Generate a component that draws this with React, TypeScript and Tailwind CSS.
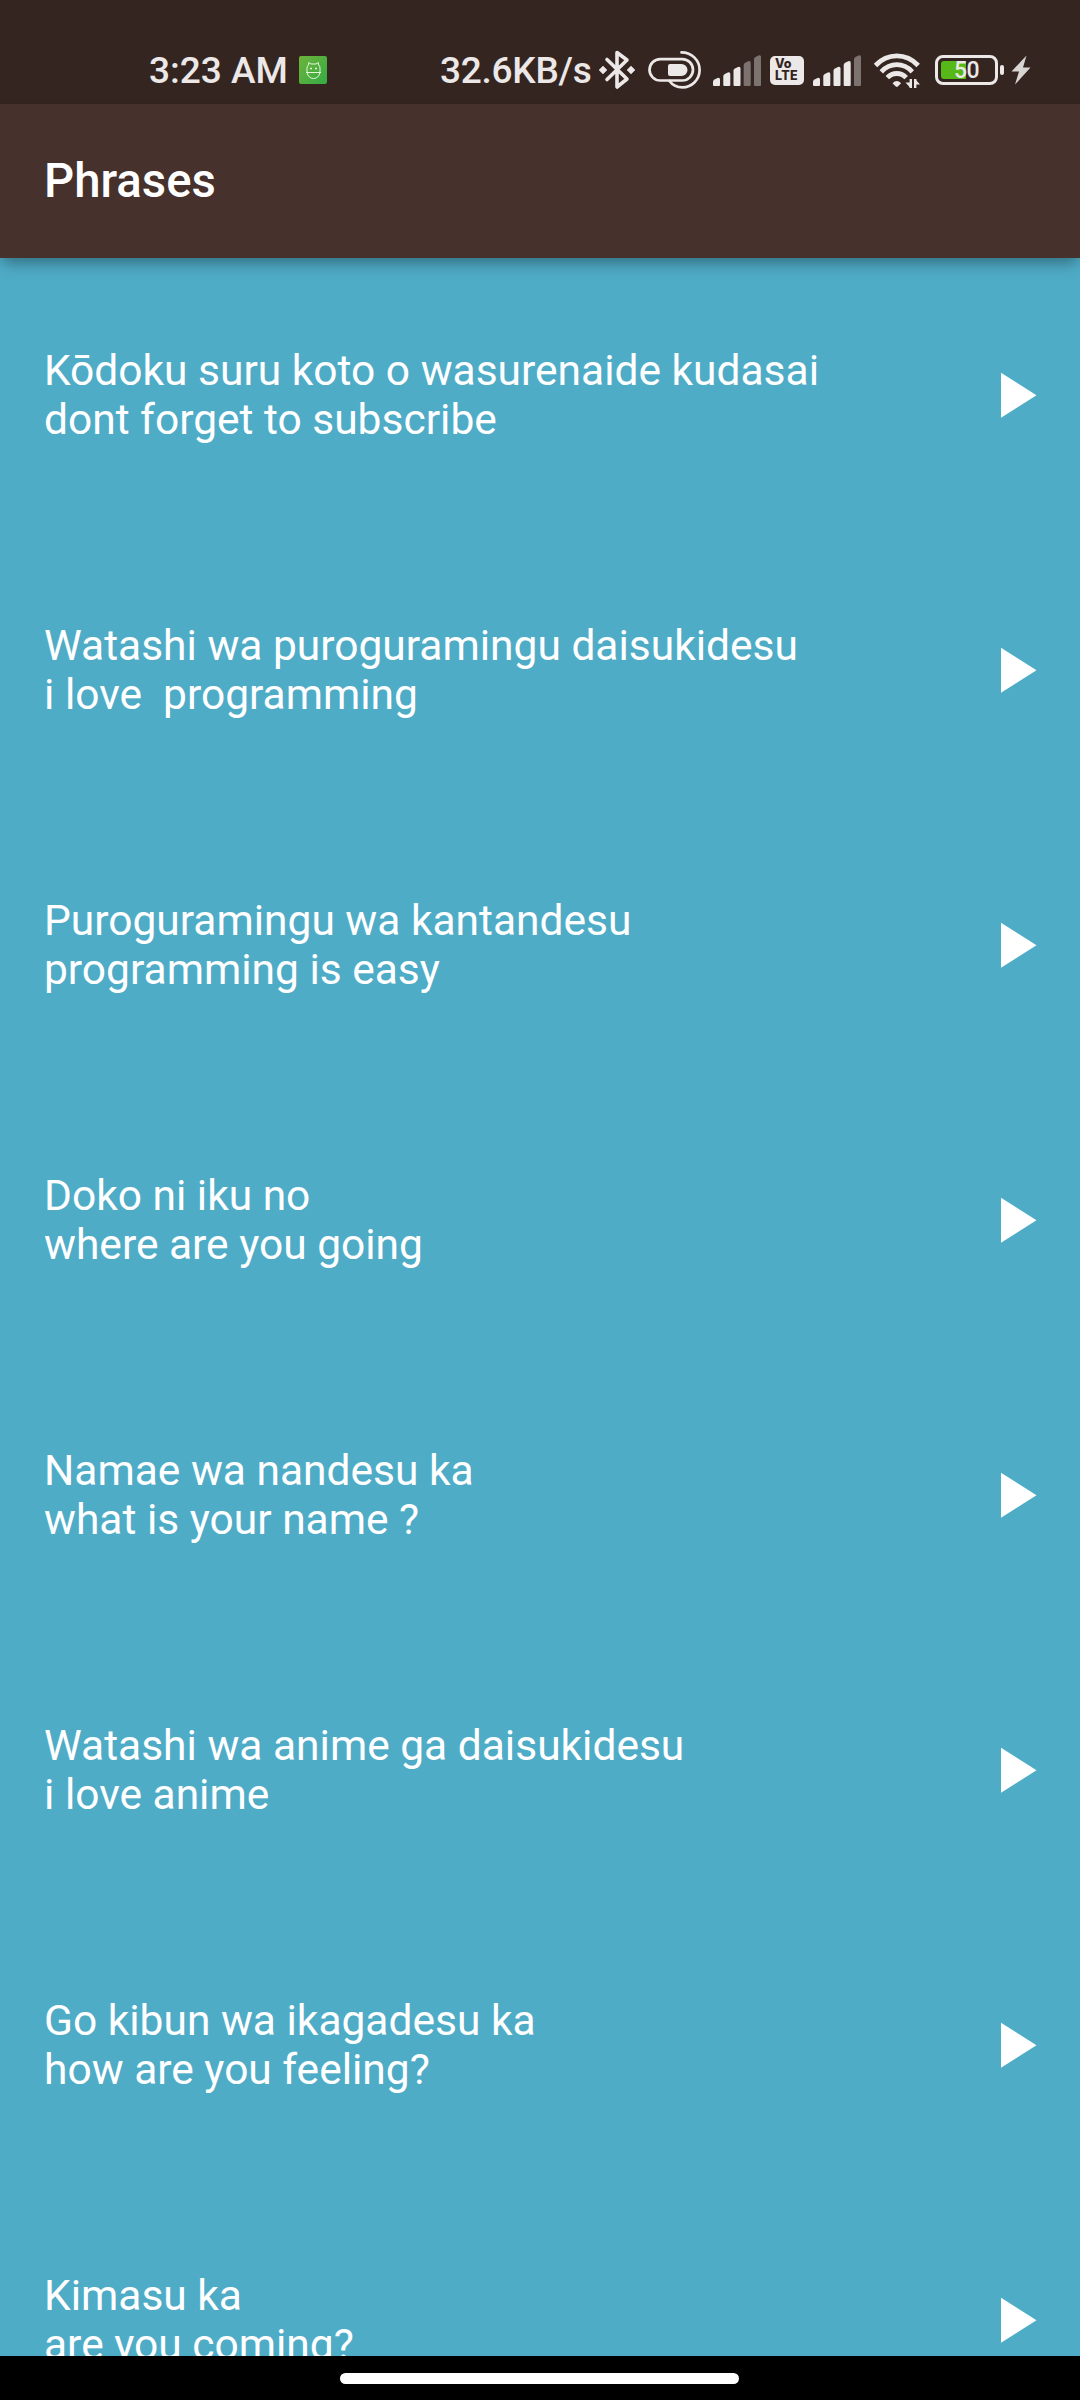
import type { ReactNode } from "react";

const INK = "#ebe8e7";

type Phrase = { japanese: string; english: string };

const phrases: Phrase[] = [
  { japanese: "Kōdoku suru koto o wasurenaide kudasai", english: "dont forget to subscribe" },
  { japanese: "Watashi wa puroguramingu daisukidesu", english: "i love  programming" },
  { japanese: "Puroguramingu wa kantandesu", english: "programming is easy" },
  { japanese: "Doko ni iku no", english: "where are you going" },
  { japanese: "Namae wa nandesu ka", english: "what is your name ?" },
  { japanese: "Watashi wa anime ga daisukidesu", english: "i love anime" },
  { japanese: "Go kibun wa ikagadesu ka", english: "how are you feeling?" },
  { japanese: "Kimasu ka", english: "are you coming?" },
];

function Icon({ w, className, children }: { w: number; className: string; children: ReactNode }) {
  return (
    <svg width={w} height={44} viewBox={`0 0 ${w} 44`} className={`shrink-0 ${className}`}>
      {children}
    </svg>
  );
}

function AppBadge() {
  return (
    <Icon w={28} className="ml-[11px]">
      <defs>
        <linearGradient id="badge" x1="0" y1="0" x2="1" y2="1">
          <stop offset="0" stopColor="#6db43a" />
          <stop offset="1" stopColor="#35ab45" />
        </linearGradient>
      </defs>
      <rect y="8" width="28" height="28" rx="2" fill="url(#badge)" />
      <g fill="none" stroke="#e4f6dc" strokeWidth="1">
        <path d="M8 24.500v-4.500q0-2 1.500-3l.2-2.500 2.300 1.500h5l2.300-1.500.2 2.500q1.500 1 1.500 3v4.500q-1.500 6-6.500 6t-6.500-6z" />
        <path d="M7 24.500h15" />
        <path d="M11 20.500h2M16 20.500h2" strokeWidth="1.400" />
      </g>
    </Icon>
  );
}

function BluetoothIcon() {
  return (
    <Icon w={36} className="ml-[7px]">
      <path d="M8 11.500L28 31L18 39V4.500L28 12L8 31.500" fill="none" stroke={INK} strokeWidth="3.600" strokeLinejoin="round" strokeLinecap="round" />
      <path d="M4 18l4 4-4 4-4-4zM32 18l4 4-4 4-4-4z" fill={INK} stroke={INK} strokeWidth="0.500" strokeLinejoin="round" />
    </Icon>
  );
}

function ToggleIcon() {
  return (
    <Icon w={54} className="ml-[13px]">
      <g fill="none" stroke={INK} strokeWidth="2.700" strokeLinecap="round">
        <rect x="1.500" y="11.200" width="43.500" height="21.300" rx="10.650" />
        <path d="M33.500 4.400C44 4.400 51.600 12.500 51.600 22S44 39.300 34.500 39.300Q26 39.300 21.500 33" />
      </g>
      <path d="M22 16h11.500a6 6 0 0 1 0 12H22a2 2 0 0 1-2-2v-8a2 2 0 0 1 2-2z" fill={INK} />
    </Icon>
  );
}

const bars = [
  { x: 0, top: 30 },
  { x: 10.3, top: 24.5 },
  { x: 20.5, top: 19 },
  { x: 30.7, top: 13.3 },
  { x: 41, top: 7.5 },
];

function SignalIcon({ level, className }: { level: number; className: string }) {
  return (
    <Icon w={48} className={className}>
      {bars.map((b, i) => (
        <path
          key={b.x}
          d={`M${b.x} ${b.top + 3.6}Q${b.x} ${b.top + 2.2} ${b.x + 1.5} ${b.top + 1.4}L${b.x + 4.5} ${b.top}Q${b.x + 7} ${b.top - 0.8} ${b.x + 7} ${b.top + 1.5}V37q0 1-1 1h-5q-1 0-1-1z`}
          fill={i < level ? INK : "#7c7370"}
        />
      ))}
    </Icon>
  );
}

function VolteIcon() {
  return (
    <div className="ml-[9px] flex h-[29px] w-[34px] shrink-0 flex-col justify-center rounded-[5px] bg-[#ebe8e7] pl-[5px] font-[Inter] text-[#33241f]">
      <span className="text-[12.5px] leading-[12px] font-extrabold">Vo</span>
      <span className="text-[12.5px] leading-[12px] font-extrabold tracking-[0.3px]">LTE</span>
    </div>
  );
}

function WifiIcon() {
  return (
    <Icon w={46} className="ml-[13px]">
      <g fill="none" stroke={INK} strokeWidth="4.800">
        <path d="M1.500 17.500Q10.500 7.900 22.800 7.900T44.200 17.500" />
        <path d="M7.300 23.800Q14 16.700 22.800 16.700T38.300 23.800" />
        <path d="M13.300 29.700Q17.300 25.500 22.800 25.500T32.200 29.700" />
      </g>
      <path d="M18.500 35.200q4.300-4.200 8.600 0l-3.300 3.300q-1 .8-2 0z" fill={INK} />
      <path d="M36.800 31v9M41.200 40v-9" stroke={INK} strokeWidth="2.400" />
      <path d="M31.500 34.500h5v5.500zM46 36.500h-5v-5.500z" fill={INK} />
    </Icon>
  );
}

function BatteryIcon() {
  return (
    <div className="ml-[15px] flex shrink-0 items-center">
      <div className="relative h-[30px] w-[63px] rounded-[8px] border-[3px] border-[#ebe8e7] p-[3px]">
        <div className="h-full w-[25px] rounded-l-[3px] bg-[#56b917]" />
        <span className="absolute top-0 left-[16px] text-[23px] leading-[25px] font-medium tracking-[-0.5px]">50</span>
      </div>
      <div className="ml-[2px] h-[10px] w-[4px] rounded-[2px] bg-[#ebe8e7]" />
    </div>
  );
}

function StatusBar() {
  return (
    <header className="flex h-[104px] shrink-0 items-start bg-[#342521] pt-[48px] text-[37px] leading-[46px] font-medium text-[#ebe8e7]">
      <div className="flex h-[44px] w-full items-center">
        <span className="ml-[149px] w-[139px] shrink-0 pt-[2px] whitespace-nowrap">3:23 AM</span>
        <AppBadge />
        <span className="ml-[113px] w-[152px] shrink-0 pt-[2px] tracking-[-0.25px] whitespace-nowrap">32.6KB/s</span>
        <BluetoothIcon />
        <ToggleIcon />
        <SignalIcon level={3} className="ml-[11px]" />
        <VolteIcon />
        <SignalIcon level={4} className="ml-[9px]" />
        <WifiIcon />
        <BatteryIcon />
        <Icon w={20} className="ml-[7px]">
          <path d="M15.500 7.500L.5 23.500h7.500L4 36.500 19.500 19.500H12z" fill="#d9d5d4" />
        </Icon>
      </div>
    </header>
  );
}

function PhraseRow({ japanese, english }: Phrase) {
  return (
    <li className="flex h-[275px] shrink-0 items-center justify-between pr-[43px] pb-px pl-[44px]">
      <p className="text-[42.5px] leading-[49px] whitespace-pre">
        {japanese}
        <br />
        {english}
      </p>
      <svg width="36" height="46" viewBox="0 0 36 46" fill="#fff">
        <path d="M0 .8L35.500 23.300L0 45.800z" />
      </svg>
    </li>
  );
}

export default function App() {
  return (
    <div className="flex h-[2400px] w-[1080px] flex-col overflow-hidden bg-[#4facc7] font-[Roboto,sans-serif] text-white">
      <StatusBar />
      <div className="z-10 flex h-[154px] shrink-0 items-center bg-[#46312c] pl-[44px] shadow-[0_11px_14px_-4px_rgba(0,0,0,0.25),0_3px_8px_rgba(0,0,0,0.1)]">
        <h1 className="text-[47.3px] leading-[56px] font-medium">Phrases</h1>
      </div>
      <ul className="flex min-h-0 flex-1 flex-col overflow-hidden">
        {phrases.map((p) => (
          <PhraseRow key={p.japanese} {...p} />
        ))}
      </ul>
      <footer className="flex h-[44px] shrink-0 items-center justify-center bg-black pr-px">
        <div className="h-[11px] w-[399px] rounded-full bg-white" />
      </footer>
    </div>
  );
}
